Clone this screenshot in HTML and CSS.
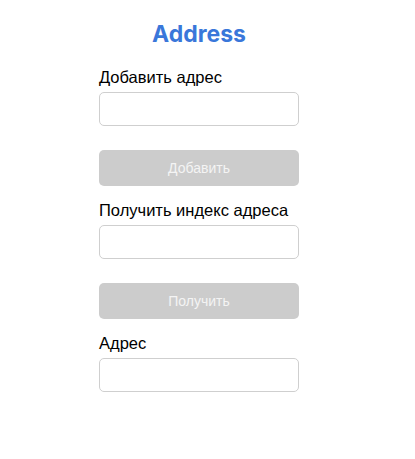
FILE: index.html
```html
<!DOCTYPE html>
<html lang="ru">
<head>
<meta charset="utf-8">
<link rel="stylesheet" href="styles.css">
</head>
<body>
<main class="page">
  <h1 class="title">Address</h1>
  <section class="group">
    <label class="label" for="add">Добавить адрес</label>
    <input class="field" id="add" type="text">
    <button class="btn" disabled>Добавить</button>
  </section>
  <section class="group">
    <label class="label" for="idx">Получить индекс адреса</label>
    <input class="field" id="idx" type="text">
    <button class="btn" disabled>Получить</button>
  </section>
  <section class="group">
    <label class="label" for="addr">Адрес</label>
    <input class="field" id="addr" type="text">
  </section>
</main>
</body>
</html>
```
FILE: styles.css
```css
html, body {
  margin: 0;
  padding: 0;
  background: #fff;
}
body {
  font-family: "Liberation Sans", sans-serif;
}
.page {
  width: 200px;
  margin-left: 99px;
  padding-top: 20px;
  display: flex;
  flex-direction: column;
}
.title {
  margin: 0;
  text-align: center;
  font-family: "Inter", "Liberation Sans", sans-serif;
  font-size: 23px;
  line-height: 28px;
  font-weight: 700;
  color: #3a77da;
}
.group {
  display: flex;
  flex-direction: column;
}
.group + .group {
  margin-top: 13px;
}
.label {
  margin-top: 18px;
  font-size: 16.5px;
  line-height: 22px;
  color: #000;
  margin-bottom: 4px;
  white-space: nowrap;
}
.group + .group .label {
  margin-top: 0;
}
.field {
  box-sizing: border-box;
  width: 200px;
  height: 34px;
  margin: 0;
  border: 1px solid #cfcfcf;
  border-radius: 5px;
  background: #fff;
  outline: none;
}
.btn {
  box-sizing: border-box;
  width: 200px;
  height: 36px;
  margin-top: 24px;
  border: none;
  border-radius: 5px;
  background: #cccccc;
  color: #f4f4f4;
  font-family: inherit;
  font-size: 14px;
}
```
